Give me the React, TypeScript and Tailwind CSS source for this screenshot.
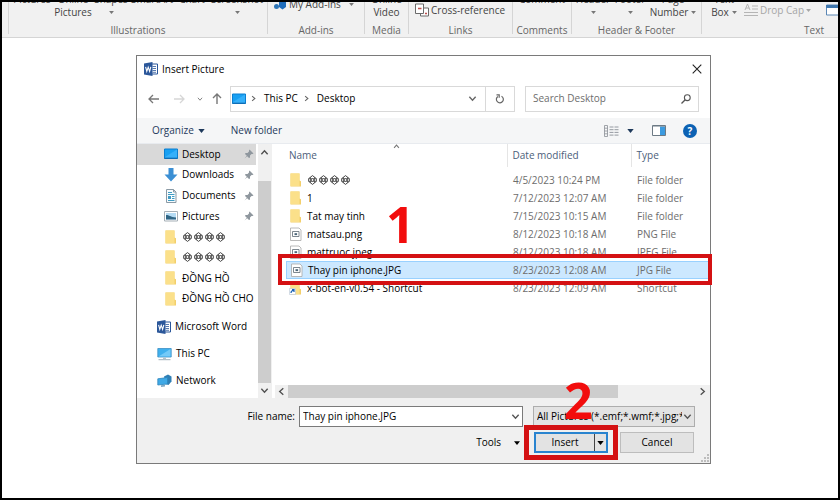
import { useState } from "react";
import type { ReactNode } from "react";

const font = "font-['Open_Sans','Noto_Sans',sans-serif]";

function Caret({ className = "h-[4px] w-[7px]" }: { className?: string }) {
  return (
    <svg viewBox="0 0 8 5" className={`shrink-0 ${className}`} aria-hidden="true">
      <path d="M0 0h8L4 5z" fill="currentColor" />
    </svg>
  );
}

function Chevron({ className = "", size = "size-[9px]" }: { className?: string; size?: string }) {
  return (
    <svg viewBox="0 0 10 10" className={`shrink-0 ${size} ${className}`} aria-hidden="true">
      <path d="M1.5 3l3.5 4 3.5-4" fill="none" stroke="currentColor" strokeWidth="1.5" />
    </svg>
  );
}

function WordIcon() {
  return (
    <svg viewBox="0 0 14 14" className="size-[14px] shrink-0" aria-hidden="true">
      <path d="M7 2h6.5v10H7z" fill="#fff" stroke="#2b579a" />
      <path d="M8.5 4.5h3.5M8.5 6.5h3.5M8.5 8.5h3.5M8.5 10.3h3.5" stroke="#2b579a" strokeWidth=".8" />
      <path d="M0 1.6L8.5 0v14L0 12.4z" fill="#2b579a" />
      <path d="M1.6 4.8l1.2 4.6 1.4-4.2 1.4 4.2 1.2-4.6" fill="none" stroke="#fff" strokeWidth="1.1" />
    </svg>
  );
}

function DesktopIcon() {
  return (
    <svg viewBox="0 0 14 12" className="h-[12px] w-[14px] shrink-0" aria-hidden="true">
      <path d="M.5 1h13v9.5H.5z" fill="#18a0f2" stroke="#0b7fd0" />
      <path d="M1 9L13 1.5V10H1z" fill="#35b0fa" />
      <path d="M.5 10.2h13" stroke="#1068ab" />
    </svg>
  );
}

function DownloadIcon() {
  return (
    <svg viewBox="0 0 14 14" className="size-[14px] shrink-0" aria-hidden="true">
      <path d="M4.5 0h5v6.5h4L7 13.5.5 6.5h4z" fill="#3b8fd4" />
    </svg>
  );
}

function DocumentIcon() {
  return (
    <svg viewBox="0 0 14 14" className="size-[14px] shrink-0" aria-hidden="true">
      <path d="M2.5.5h7L12 3v10.5H2.5z" fill="#f7fbfd" stroke="#8b9aa5" />
      <path d="M9.5.5V3H12" fill="none" stroke="#8b9aa5" />
      <path d="M4 3.500h4M4 5.500h6.500M8 7.500h2.500M8 9.500h2.500M4 11.500h6.500" stroke="#3f9cc4" />
      <path d="M4 7h3v3H4z" fill="#3f9cc4" />
    </svg>
  );
}

function PicturesIcon() {
  return (
    <svg viewBox="0 0 14 12" className="h-[12px] w-[14px] shrink-0" aria-hidden="true">
      <path d="M.5 1.500h13v9.500H.5z" fill="#fff" stroke="#a5afb6" />
      <path d="M2 3h10v6.500H2z" fill="#b4dbf4" />
      <path d="M2 5c2.500-.5 4 2 10 2.500v2H2z" fill="#2f6585" />
    </svg>
  );
}

function FolderIcon({ shortcut = false }: { shortcut?: boolean }) {
  return (
    <svg viewBox="0 0 14 14" className="size-[14px] shrink-0" aria-hidden="true">
      <path d="M1.500.5h9v7l1.500.8v5.200H1.500z" fill="#f3cf6b" />
      <path d="M1.500.5h9v12.500h-9z" fill="#fbe08a" />
      {shortcut && (
        <>
          <path d="M.5 7.500h6v6h-6z" fill="#fff" stroke="#b5c4d4" strokeWidth=".6" />
          <path d="M2 12c0-2 1-2.500 2.500-2.500M3 8.700h2v2.200" fill="none" stroke="#1b62b5" strokeWidth="1.200" />
        </>
      )}
    </svg>
  );
}

function ImageFileIcon() {
  return (
    <svg viewBox="0 0 14 14" className="size-[14px] shrink-0" aria-hidden="true">
      <path d="M1.500 1h8.500l2 2v10.500H1.500z" fill="#fff" stroke="#a8a8a8" strokeWidth=".8" />
      <path d="M3.500 4.500h6.500v5H3.500z" fill="#fff" stroke="#6f7a83" strokeWidth=".9" />
      <path d="M5.500 6.200h2.600v1.900H5.500z" fill="#4a6578" />
    </svg>
  );
}

function ThisPcIcon() {
  return (
    <svg viewBox="0 0 15 14" className="h-[14px] w-[15px] shrink-0" aria-hidden="true">
      <path d="M.8 1.500h13.400v8.500H.8z" fill="#3fb0ee" stroke="#3b8fc4" strokeWidth=".8" />
      <path d="M1.500 9.500L13.500 2v7.500z" fill="#74caf8" />
      <path d="M6 10.500h3V12H6z" fill="#b4c2cb" />
      <path d="M1.500 12.700h12" stroke="#9fb0bb" />
    </svg>
  );
}

function NetworkIcon() {
  return (
    <svg viewBox="0 0 15 14" className="h-[14px] w-[15px] shrink-0" aria-hidden="true">
      <path d="M7 2.500L11 .5l3.500 2v5l-3 3.500-3-1z" fill="#2f7fb5" />
      <path d="M.8 4.800l9.700-1.300v6.500L.8 11z" fill="#3fa9e6" stroke="#2e86bd" strokeWidth=".8" />
      <path d="M4 11.200l4-.4v1.700l-4 .6z" fill="#7fa9c4" />
    </svg>
  );
}

function Pin() {
  return (
    <svg viewBox="0 0 10 10" className="size-[10px] shrink-0" aria-hidden="true">
      <path d="M5.500.5l4 4-1 .5h-1L6 6.500v2L5 9 3.200 7.200.5 9.500l2.300-2.700L1 5l.5-1h2L5 2.500v-1z" fill="#8f979e" />
    </svg>
  );
}

function Gems() {
  return (
    <span className="flex gap-[2px] pl-px" role="img" aria-label="four diamonds">
      {[0, 1, 2, 3].map((i) => (
        <svg key={i} viewBox="0 0 9 10" className="h-[10px] w-[9px]" aria-hidden="true">
          <path d="M4.500.6l3.800 3v2.800l-3.800 3-3.800-3V3.600z" fill="none" stroke="#333" strokeWidth=".9" />
          <path d="M.7 3.600h7.600M.7 6.400h7.600M2.500 2.200v5.600M6.500 2.200v5.600" stroke="#444" strokeWidth=".7" />
          <circle cx="4.500" cy="5" r="1.400" fill="#fff" stroke="#333" strokeWidth=".8" />
        </svg>
      ))}
    </span>
  );
}

function RibbonGroup({ label, className, children }: { label: string; className: string; children: ReactNode }) {
  return (
    <section className={`flex shrink-0 flex-col ${className}`}>
      <div className="-mt-[9px] flex h-[30px] shrink-0 items-start">{children}</div>
      <h2 className="text-center leading-[14px] text-[#666]">{label}</h2>
    </section>
  );
}

function RibbonDivider() {
  return <div className="h-[32px] w-px shrink-0 bg-[#d5d5d5]" />;
}

function RibbonButton({ lines, caret = false, className }: { lines: string[]; caret?: boolean; className: string }) {
  return (
    <button className={`flex shrink-0 flex-col items-center leading-[13px] whitespace-nowrap ${className}`}>
      {lines.map((line, i) => (
        <span key={line} className="flex items-center gap-[3px]">
          {line}
          {caret && i > 0 && <Caret className="h-[3px] w-[5px] text-[#777]" />}
        </span>
      ))}
      {caret && lines.length === 1 && <Caret className="mt-[5px] h-[3px] w-[5px] text-[#777]" />}
    </button>
  );
}

function Ribbon() {
  return (
    <header className="flex h-[36px] overflow-hidden border-b border-[#d5d5d5] bg-[#f1f1f1] pl-[6px] text-[10px] text-[#444]">
      <RibbonDivider />
      <RibbonGroup label="Illustrations" className="w-[258px]">
        <RibbonButton lines={["Pictures"]} className="ml-px w-[44px]" />
        <RibbonButton lines={["Online", "Pictures"]} className="w-[38px]" />
        <RibbonButton lines={["Shapes"]} caret className="w-[38px]" />
        <RibbonButton lines={["SmartArt"]} className="w-[44px]" />
        <RibbonButton lines={["Chart"]} className="w-[36px]" />
        <RibbonButton lines={["Screenshot"]} caret className="w-[54px]" />
      </RibbonGroup>
      <RibbonDivider />
      <RibbonGroup label="Add-ins" className="w-[96px]">
        <button className="mt-[4px] ml-[6px] flex items-center gap-[3px] leading-[14px] whitespace-nowrap">
          <svg viewBox="0 0 12 12" className="size-[12px]" aria-hidden="true">
            <circle cx="2.500" cy="8.500" r="2.500" fill="#2e75b6" />
            <path d="M5 4l3.500-2L12 4v5l-3.500 2.500L5 9z" fill="#1f6dbb" />
          </svg>
          My Add-ins
          <Caret className="ml-[5px] h-[3px] w-[5px] text-[#777]" />
        </button>
      </RibbonGroup>
      <RibbonDivider />
      <RibbonGroup label="Media" className="w-[43px]">
        <RibbonButton lines={["Online", "Video"]} className="w-full" />
      </RibbonGroup>
      <RibbonDivider />
      <RibbonGroup label="Links" className="w-[103px]">
        <button className="mt-[10px] ml-[6px] flex items-center gap-[2px] leading-[14px] whitespace-nowrap">
          <svg viewBox="0 0 14 14" className="size-[14px]" aria-hidden="true">
            <path d="M8.500 5h5v8h-8v-2.500" fill="#fff" stroke="#6b6b6b" />
            <path d="M.5 1h8v9.500h-8z" fill="#fff" stroke="#6b6b6b" />
            <path d="M3 5.500h3.500M10 10.500h2" stroke="#c0504d" strokeWidth="1.300" />
          </svg>
          Cross-reference
        </button>
      </RibbonGroup>
      <RibbonDivider />
      <RibbonGroup label="Comments" className="w-[58px]">
        <RibbonButton lines={["Comment"]} className="w-full" />
      </RibbonGroup>
      <RibbonDivider />
      <RibbonGroup label="Header &amp; Footer" className="w-[129px]">
        <RibbonButton lines={["Header"]} caret className="ml-[2px] w-[38px]" />
        <RibbonButton lines={["Footer"]} caret className="w-[36px]" />
        <RibbonButton lines={["Page", "Number"]} caret className="w-[50px]" />
      </RibbonGroup>
      <RibbonDivider />
      <section className="flex min-w-0 flex-1 flex-col">
        <div className="-mt-[9px] flex h-[30px] shrink-0 items-start">
          <RibbonButton lines={["Text", "Box"]} caret className="ml-[6px] w-[32px]" />
          <button className="mt-[10px] ml-[4px] flex items-center gap-[2px] leading-[14px] whitespace-nowrap text-[#a6a6a6]">
            <svg viewBox="0 0 14 14" className="size-[14px]" aria-hidden="true">
              <path d="M1 7l2.500-6L6 7M2 5h3M8 3h6M8 6h6M0 9.500h14M0 12.500h14" fill="none" stroke="#b5b5b5" />
            </svg>
            Drop Cap
            <Caret className="h-[3px] w-[5px]" />
          </button>
          <svg viewBox="0 0 12 12" className="mt-[11px] ml-auto size-[12px] shrink-0" aria-hidden="true">
            <path d="M.5 1h13v10H.5z" fill="#fff" stroke="#5b87b5" />
            <path d="M0 1h14v3H0z" fill="#3f77ae" />
          </svg>
        </div>
        <h2 className="pr-[14px] text-right leading-[14px] text-[#666]">Text</h2>
      </section>
    </header>
  );
}

const quickAccess: { icon: ReactNode; name: ReactNode; pinned?: boolean; key: string }[] = [
  { key: "desktop", icon: <DesktopIcon />, name: "Desktop", pinned: true },
  { key: "downloads", icon: <DownloadIcon />, name: "Downloads", pinned: true },
  { key: "documents", icon: <DocumentIcon />, name: "Documents", pinned: true },
  { key: "pictures", icon: <PicturesIcon />, name: "Pictures", pinned: true },
  { key: "gems-a", icon: <FolderIcon />, name: <Gems /> },
  { key: "gems-b", icon: <FolderIcon />, name: <Gems /> },
  { key: "dong-ho", icon: <FolderIcon />, name: "ĐỒNG HỒ" },
  { key: "dong-ho-cho", icon: <FolderIcon />, name: "ĐỒNG HỒ CHO" },
];

const places = [
  { icon: <WordIcon />, name: "Microsoft Word" },
  { icon: <ThisPcIcon />, name: "This PC" },
  { icon: <NetworkIcon />, name: "Network" },
];

const files: { key: string; icon: ReactNode; name: ReactNode; date: string; type: string; selected?: boolean }[] = [
  { key: "gems", icon: <FolderIcon />, name: <Gems />, date: "4/5/2023 10:24 PM", type: "File folder" },
  { key: "1", icon: <FolderIcon />, name: "1", date: "7/12/2023 12:07 AM", type: "File folder" },
  { key: "tat", icon: <FolderIcon />, name: "Tat may tinh", date: "7/15/2023 10:15 AM", type: "File folder" },
  { key: "matsau", icon: <ImageFileIcon />, name: "matsau.png", date: "8/12/2023 10:18 AM", type: "PNG File" },
  { key: "mattruoc", icon: <ImageFileIcon />, name: "mattruoc.jpeg", date: "8/12/2023 10:18 AM", type: "JPEG File" },
  { key: "thay", icon: <ImageFileIcon />, name: "Thay pin iphone.JPG", date: "8/23/2023 12:08 AM", type: "JPG File", selected: true },
  { key: "xbot", icon: <FolderIcon shortcut />, name: "x-bot-en-v0.54 - Shortcut", date: "8/23/2023 12:09 AM", type: "Shortcut" },
];

function Sidebar() {
  return (
    <nav aria-label="Folders" className="flex w-[134px] shrink-0">
      <div className="min-w-0 flex-1 overflow-hidden">
        <ul className="flex h-[165px] flex-col">
          {quickAccess.map((item, i) => (
            <li key={item.key} className={`flex flex-1 ${i === 0 ? "mr-[2px] bg-[#d9d9d9]" : "mr-[2px]"}`}>
              <button className="flex w-full items-center gap-[4px] pr-[2px] pl-[27px] whitespace-nowrap">
                {item.icon}
                {item.name}
                {item.pinned && (
                  <span className="ml-auto">
                    <Pin />
                  </span>
                )}
              </button>
            </li>
          ))}
        </ul>
        <ul className="pt-[4px]">
          {places.map((place) => (
            <li key={place.name}>
              <button className="flex h-[27px] items-center gap-[4px] pl-[20px] whitespace-nowrap">
                {place.icon}
                {place.name}
              </button>
            </li>
          ))}
        </ul>
      </div>
      <div className="flex w-[13px] shrink-0 flex-col items-center bg-[#f0f0f0] text-[#505050]">
        <Chevron className="my-[4px] rotate-180" />
        <div className="mt-[20px] w-full flex-1 bg-[#cdcdcd]" />
        <Chevron className="my-[3px]" />
      </div>
    </nav>
  );
}

function FileList() {
  return (
    <div className="flex min-w-0 flex-1 flex-col border-l border-[#f0f0f0] pl-[3px]">
      <div className="relative flex-1">
        <Chevron size="size-[7px]" className="absolute -top-px left-[118px] rotate-180 text-[#777]" />
        <table className="w-full table-fixed border-collapse text-[#6d6d6d]">
          <thead>
            <tr className="h-[23px] text-left text-[#4c607a]">
              <th className="pl-[14px] font-normal">Name</th>
              <th className="w-[124px] border-l border-[#e5e5e5] pl-[5px] font-normal">Date modified</th>
              <th className="w-[79px] border-l border-[#e5e5e5] pl-[5px] font-normal">Type</th>
            </tr>
            <tr className="h-[4px]" />
          </thead>
          <tbody>
            {files.map((file) => (
              <tr key={file.key} className="h-[18px]">
                <td className="p-0 pl-[11px] text-black">
                  <span
                    className={`flex h-[18px] items-center gap-[4px] pl-[3px] whitespace-nowrap ${file.selected ? "border-y border-l border-[#99d1ff] bg-[#cce8ff] pl-[2px]" : ""}`}
                  >
                    {file.icon}
                    {file.name}
                  </span>
                </td>
                <td className={`p-0 whitespace-nowrap ${file.selected ? "bg-[#cce8ff]" : ""}`}>
                  <span className={`flex h-[18px] items-center pl-[6px] ${file.selected ? "border-y border-[#99d1ff]" : ""}`}>
                    {file.date}
                  </span>
                </td>
                <td className={`p-0 whitespace-nowrap ${file.selected ? "bg-[#cce8ff]" : ""}`}>
                  <span className={`flex h-[18px] items-center pl-[6px] ${file.selected ? "border-y border-[#99d1ff]" : ""}`}>
                    {file.type}
                  </span>
                </td>
              </tr>
            ))}
          </tbody>
        </table>
        <div className="absolute top-[110px] -right-[2px] left-[3px] h-[31px] border-4 border-[#d41113]" />
        <span className="absolute top-[46px] left-[111px] text-[50px] leading-[68px] font-bold text-[#f20d0d]">1</span>
      </div>
      <div className="flex h-[13px] items-center bg-[#f0f0f0] pr-[3px] text-[#505050]">
        <Chevron className="mx-[2px] rotate-90" />
        <div className="h-full w-[330px] bg-[#cdcdcd]" />
        <Chevron className="ml-auto -rotate-90" />
      </div>
    </div>
  );
}

export default function App() {
  const [name, setName] = useState("Thay pin iphone.JPG");
  return (
    <div className={`min-h-screen border-2 border-black bg-white text-[10px] text-black ${font}`}>
      <Ribbon />
      <main className="pt-[17px] pr-[127px] pl-[134px]">
        <div role="dialog" aria-label="Insert Picture" className="border border-[#7a7a7a] bg-white">
          <div className="flex h-[26px] items-center gap-[4px] pr-[8px] pl-[7px]">
            <WordIcon />
            <h1>Insert Picture</h1>
            <button aria-label="Close" className="ml-auto">
              <svg viewBox="0 0 10 10" className="size-[10px]" aria-hidden="true">
                <path d="M.7.7l8.600 8.600M9.300.7L.7 9.300" stroke="#222" strokeWidth="1.100" />
              </svg>
            </button>
          </div>

          <div className="flex h-[36px] items-center px-[11px] pb-[3px] text-[#4a4a4a]">
            <button aria-label="Back">
              <svg viewBox="0 0 11 10" className="h-[10px] w-[11px]" aria-hidden="true">
                <path d="M5 1L1 5l4 4M1 5h10" fill="none" stroke="#777" strokeWidth="1.300" />
              </svg>
            </button>
            <button aria-label="Forward" className="ml-[15px]">
              <svg viewBox="0 0 11 10" className="h-[10px] w-[11px]" aria-hidden="true">
                <path d="M6 1l4 4-4 4M10 5H0" fill="none" stroke="#d6d6d6" strokeWidth="1.300" />
              </svg>
            </button>
            <button aria-label="Recent locations" className="ml-[12px]">
              <Chevron size="size-[6px]" className="text-[#777]" />
            </button>
            <button aria-label="Up" className="ml-[9px]">
              <svg viewBox="0 0 10 11" className="h-[11px] w-[10px]" aria-hidden="true">
                <path d="M1 5l4-4 4 4M5 1v10" fill="none" stroke="#777" strokeWidth="1.400" />
              </svg>
            </button>
            <div className="ml-[8px] flex h-[26px] min-w-0 flex-1 items-center border border-[#d9d9d9] pl-px text-black">
              <DesktopIcon />
              <Chevron size="size-[7px]" className="ml-[4px] -rotate-90 text-[#666]" />
              <button className="ml-[7px]">This PC</button>
              <Chevron size="size-[7px]" className="ml-[5px] -rotate-90 text-[#666]" />
              <button className="ml-[7px]">Desktop</button>
              <button aria-label="Previous locations" className="mr-[8px] ml-auto">
                <Chevron className="text-[#666]" />
              </button>
              <button aria-label="Refresh" className="flex h-full w-[29px] items-center justify-center border-l border-[#d9d9d9]">
                <svg viewBox="0 0 10 10" className="size-[10px]" aria-hidden="true">
                  <path d="M6.500 2.200a3.500 3.500 0 1 1-3.600.2M1.500.8h2.700v2.900" fill="none" stroke="#666" strokeWidth="1.200" />
                </svg>
              </button>
            </div>
            <label className="ml-[10px] flex h-[26px] w-[174px] items-center border border-[#d9d9d9] px-[7px]">
              <input aria-label="Search Desktop" placeholder="Search Desktop" className="min-w-0 flex-1 outline-none placeholder:text-[#6d6d6d]" />
              <svg viewBox="0 0 10 10" className="size-[10px]" aria-hidden="true">
                <circle cx="6.300" cy="3.700" r="2.900" fill="none" stroke="#555" strokeWidth="1.100" />
                <path d="M4.200 5.800L.5 9.500" stroke="#555" strokeWidth="1.300" />
              </svg>
            </label>
          </div>

          <div className="flex h-[26px] items-center border-b border-[#e8ebef] bg-[#f5f6f7] pr-[13px] pl-[15px] text-[#1e395b]">
            <button className="flex items-center gap-[4px]">
              Organize
              <Caret />
            </button>
            <button className="ml-[26px]">New folder</button>
            <button aria-label="Change your view" className="ml-auto flex items-center gap-[8px]">
              <svg viewBox="0 0 15 12" className="h-[12px] w-[15px]" aria-hidden="true">
                <path d="M.5.5h3v11h-3zM.5 3.200h3M.5 6h3M.5 8.800h3" fill="none" stroke="#8a8f96" strokeWidth=".8" />
                <path d="M5.500 2h4M10.500 2h4M5.500 4.700h4M10.500 4.700h4M5.500 7.400h4M10.500 7.400h4M5.500 10.100h4M10.500 10.100h4" stroke="#8a8f96" strokeWidth=".9" />
              </svg>
              <Caret />
            </button>
            <button aria-label="Preview pane" className="ml-[18px]">
              <svg viewBox="0 0 14 11" className="h-[11px] w-[14px]" aria-hidden="true">
                <path d="M.5.5h13v10H.5z" fill="#fff" stroke="#6d7a85" />
                <path d="M8 1.500h5V10H8z" fill="#3c9be0" />
                <path d="M1 1h12" stroke="#6d7a85" />
              </svg>
            </button>
            <button aria-label="Help" className="ml-[17px] flex size-[14px] items-center justify-center rounded-full bg-[#0c62b4] leading-none font-bold text-white">
              ?
            </button>
          </div>

          <div className="flex h-[254px]">
            <Sidebar />
            <FileList />
          </div>

          <div className="bg-[#f0f0f0] pt-[8px]">
            <div className="flex items-center pr-[15px]">
              <label htmlFor="file-name" className="w-[162px] shrink-0 pr-[4px] text-right">
                File name:
              </label>
              <div className="flex h-[21px] min-w-0 flex-1 items-center border border-[#7a7a7a] bg-white pr-[2px] pl-[3px]">
                <input id="file-name" value={name} onChange={(e) => setName(e.target.value)} className="min-w-0 flex-1 outline-none" />
                <Chevron className="text-[#555]" />
              </div>
              <div className="relative ml-[10px] w-[162px] shrink-0">
                <select aria-label="File type" className="h-[21px] w-full appearance-none border border-[#adadad] bg-[#e3e3e3] pr-[12px] pl-[3px]">
                  <option>All Pictures (*.emf;*.wmf;*.jpg;*</option>
                </select>
                <Chevron className="pointer-events-none absolute top-[6px] right-[3px] text-[#555]" />
                <span className="pointer-events-none absolute -top-[40px] left-[31px] z-10 text-[50px] leading-[68px] font-bold text-[#f20d0d]">
                  2
                </span>
              </div>
            </div>
            <div className="mt-[5px] flex items-center justify-end pr-[16px]">
              <button className="mr-[14px] flex items-center gap-[13px]">
                Tools
                <Caret className="h-[4px] w-[6px]" />
              </button>
              <div className="relative flex h-[21px] w-[74px] border-2 border-[#2a84cf] bg-[#e3e3e3]">
                <button className="flex-1">Insert</button>
                <button aria-label="Insert options" className="flex w-[12px] items-center justify-center border-l border-[#444]">
                  <Caret />
                </button>
                <div className="pointer-events-none absolute -inset-x-[12px] -inset-y-[9px] border-[5px] border-[#d41113]" />
              </div>
              <button className="ml-[12px] h-[21px] w-[74px] border border-[#bdbdbd] bg-[#e3e3e3]">Cancel</button>
            </div>
            <div className="flex h-[10px] items-end justify-end p-px">
              <svg viewBox="0 0 8 8" className="size-[8px]" aria-hidden="true">
                <path d="M6 0h2v2H6zM3 3h2v2H3zM6 3h2v2H6zM0 6h2v2H0zM3 6h2v2H3zM6 6h2v2H6z" fill="#bdbdbd" />
              </svg>
            </div>
          </div>
        </div>
      </main>
    </div>
  );
}
